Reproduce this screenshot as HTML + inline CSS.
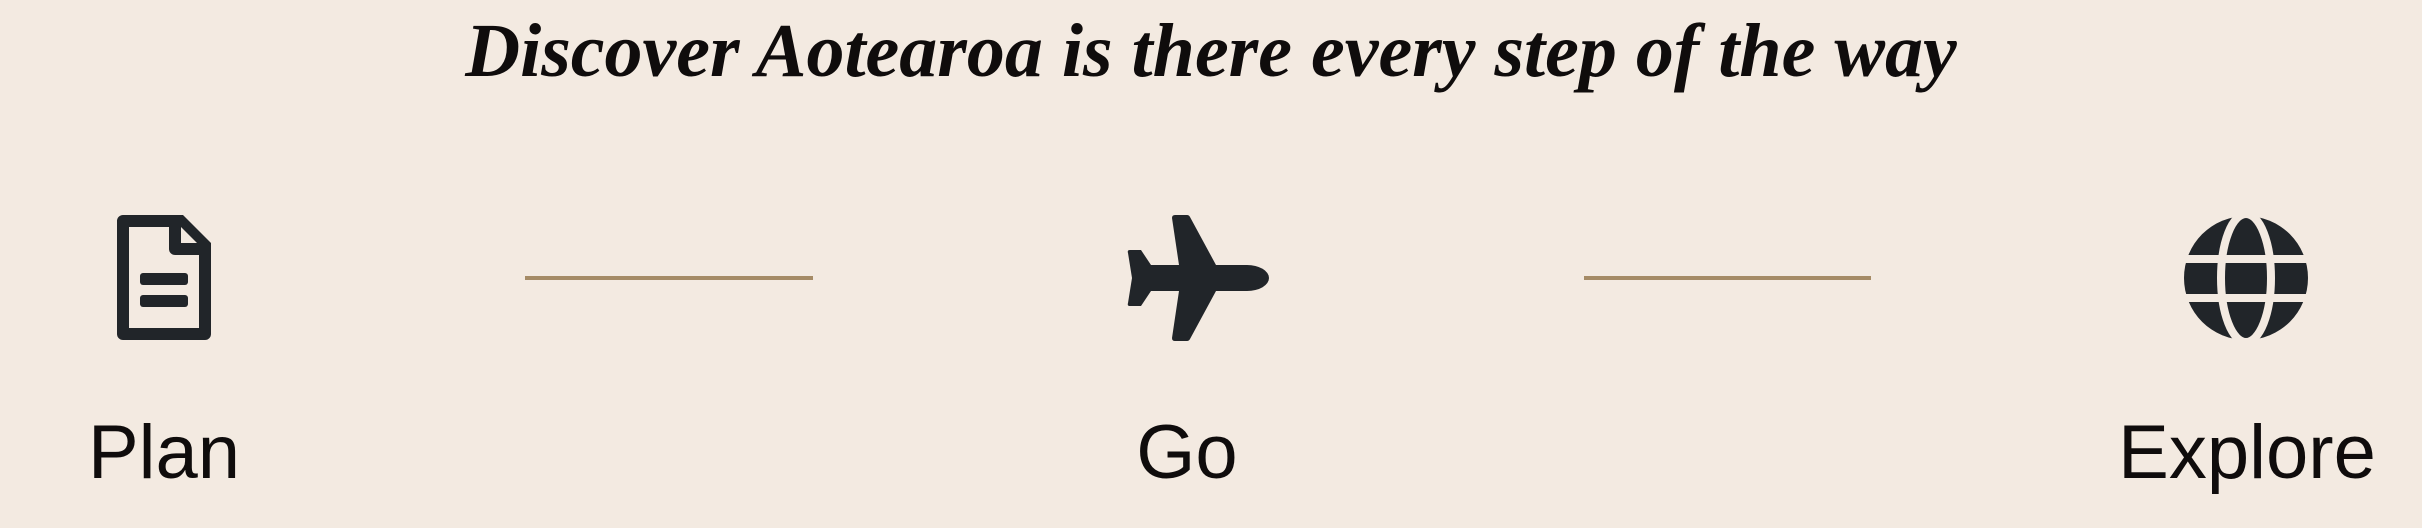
<!DOCTYPE html>
<html><head><meta charset="utf-8"><style>
html,body{margin:0;padding:0}
body{width:2422px;height:528px;background:#f3eae1;position:relative;overflow:hidden;font-family:"Liberation Sans",sans-serif}
.t{position:absolute;left:0;width:2422px;top:1px;text-align:center;font-family:"Liberation Serif",serif;font-style:italic;font-weight:bold;font-size:76px;color:#0f0c0c;line-height:100px}
.l{position:absolute;top:276px;height:4px;background:#a58b66}
.lab{position:absolute;top:403px;font-size:76px;color:#0f0c0c;line-height:100px;text-align:center;width:400px}
svg{position:absolute;top:0;left:0}
</style></head><body>
<div class="t">Discover Aotearoa is there every step of the way</div>
<div class="l" style="left:525px;width:288px"></div>
<div class="l" style="left:1584px;width:287px"></div>
<svg width="2422" height="528">
<g fill="#212529">
<path d="M123 215 H183 L211 243 V334 A6 6 0 0 1 205 340 H123 A6 6 0 0 1 117 334 V221 A6 6 0 0 1 123 215 Z M129 227 V328 H199 V255 H175 A6 6 0 0 1 169 249 V227 Z M181 227 V243 H197 Z" fill-rule="evenodd"/>
<rect x="140" y="273" width="48" height="12" rx="3"/>
<rect x="140" y="295" width="48" height="12" rx="3"/>
<path d="M1130 250 H1141 L1151 265 H1179 L1172 218 Q1172 215 1175 215 H1187 Q1189 215 1190 217 L1216 265 H1247 A22 13 0 0 1 1247 291 H1216 L1190 339 Q1189 341 1187 341 H1175 Q1172 341 1172 338 L1179 291 H1151 L1141 306 H1130 Q1127 306 1128 303 L1132 278 L1128 253 Q1127 250 1130 250 Z"/>
<circle cx="2246" cy="278" r="62"/>
</g>
<g stroke="#f3eae1" fill="none">
<ellipse cx="2246" cy="278" rx="25" ry="64" stroke-width="8"/>
<line x1="2180" y1="259" x2="2312" y2="259" stroke-width="8"/>
<line x1="2180" y1="298" x2="2312" y2="298" stroke-width="8"/>
</g>
</svg>
<div class="lab" style="left:-36px">Plan</div>
<div class="lab" style="left:987px">Go</div>
<div class="lab" style="left:2047px">Explore</div>
</body></html>
